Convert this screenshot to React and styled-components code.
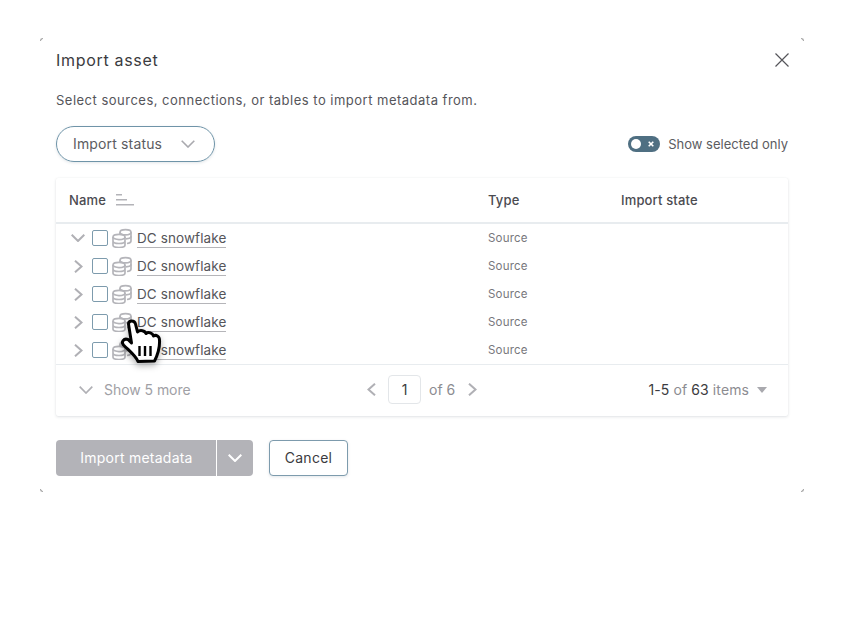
import React from "react";
import styled, {createGlobalStyle} from "styled-components";

const GlobalStyle = createGlobalStyle`
  html, body {
    margin: 0;
    padding: 0;
    background: #fff;
    font-family: Inter, "Liberation Sans", sans-serif;
    color: #3b3b40;
  }
`;

const Modal = styled.div`
  position: relative;
  box-sizing: border-box;
  width: 764px;
  height: 454px;
  margin: 38px 40px 0;
  padding: 10px 16px 16px;
  display: flex;
  flex-direction: column;
`;

const Tick = styled.span`
  position: absolute;
  width: 3px;
  height: 3px;
  ${p => p.$top ? "top: 0;" : "bottom: 0;"}
  ${p => p.$left ? "left: 0;" : "right: 0;"}
  border-${p => p.$top ? "top" : "bottom"}: 1px solid #a5a5a5;
  border-${p => p.$left ? "left" : "right"}: 1px solid #a5a5a5;
  border-${p => p.$top ? "top" : "bottom"}-${p => p.$left ? "left" : "right"}-radius: 3px;
  box-sizing: border-box;
`;

const Header = styled.div`
  display: flex;
  align-items: center;
  justify-content: space-between;
  height: 24px;
`;

const Title = styled.h2`
  margin: 0;
  font-size: 16px;
  font-weight: 400;
  letter-spacing: 0.68px;
  color: #3b3b40;
`;

const CloseIcon = styled.svg`
  margin-right: -1px;
`;

const Description = styled.p`
  margin: 18px 0 0;
  height: 20px;
  line-height: 20px;
  font-size: 13px;
  letter-spacing: 0.49px;
  color: #55555a;
`;

const Toolbar = styled.div`
  display: flex;
  align-items: center;
  justify-content: space-between;
  margin-top: 16px;
`;

const FilterPill = styled.div`
  box-sizing: border-box;
  width: 159px;
  height: 36px;
  padding: 0 19px 0 16px;
  display: flex;
  align-items: center;
  justify-content: space-between;
  border: 1px solid #6f94a8;
  border-radius: 18px;
  box-shadow: 0 1px 3px rgba(60, 90, 110, .15);
  font-size: 14px;
  letter-spacing: 0.15px;
  line-height: 16px;
  color: #5c5c61;
`;

const ToggleRow = styled.div`
  display: flex;
  align-items: center;
  gap: 8px;
  font-size: 13px;
  color: #5c5c61;
`;

const Toggle = styled.span`
  position: relative;
  width: 32px;
  height: 16px;
  border-radius: 8px;
  background: #4f6f82;
  display: block;
`;

const Knob = styled.span`
  position: absolute;
  top: 3px;
  left: 3px;
  width: 10px;
  height: 10px;
  border-radius: 50%;
  background: #fff;
`;

const ToggleX = styled.svg`
  position: absolute;
  top: 5px;
  right: 6px;
`;

const Card = styled.div`
  margin-top: 16px;
  height: 238px;
  display: flex;
  flex-direction: column;
  border-radius: 2px;
  background: #fff;
  box-shadow: 0 1px 3px rgba(40, 60, 80, .14), 0 0 1px rgba(40, 60, 80, .08);
`;

const TableRow = styled.div`
  display: grid;
  grid-template-columns: 432px 133px 1fr;
  align-items: center;
  height: ${p => p.$head ? "44px" : "28px"};
  ${p => p.$head && "border-bottom: 2px solid #e8ecef;"}
`;

const HeadCell = styled.div`
  display: flex;
  align-items: center;
  gap: 10px;
  font-size: 13px;
  font-weight: 500;
  letter-spacing: 0.15px;
  color: #4b4b50;
  ${p => p.$first && "padding-left: 13px;"}
`;

const NameCell = styled.div`
  display: flex;
  align-items: center;
  padding-left: 15px;
`;

const ChevronSlot = styled.span`
  width: 14px;
  display: flex;
  justify-content: center;
`;

const Checkbox = styled.span`
  box-sizing: border-box;
  width: 16px;
  height: 16px;
  margin: 0 4px 0 7px;
  border: 1px solid #7d9bad;
  border-radius: 2px;
  background: #fff;
`;

const AssetLink = styled.span`
  margin: 2px 0 0 5px;
  font-size: 13.5px;
  line-height: 17px;
  letter-spacing: 0.1px;
  color: #55555a;
  border-bottom: 1px solid #b5b5b9;
`;

const TypeCell = styled.div`
  font-size: 11.5px;
  letter-spacing: 0.2px;
  color: #77777c;
`;

const Rows = styled.div`
  flex: none;
`;

const Footer = styled.div`
  flex: 1;
  box-sizing: border-box;
  padding-bottom: 2px;
  display: grid;
  grid-template-columns: 306px auto 1fr;
  align-items: center;
  border-top: 1px solid #e8ecef;
  font-size: 14px;
  color: #8c8c91;
`;

const ShowMore = styled.div`
  display: flex;
  align-items: center;
  gap: 11px;
  padding-left: 23px;
  letter-spacing: -0.05px;
  color: #a0a0a5;
`;

const Pager = styled.div`
  display: flex;
  align-items: center;
  padding-left: 5px;
`;

const PageInput = styled.span`
  box-sizing: border-box;
  width: 33px;
  height: 29px;
  margin: 0 8px 0 12px;
  display: flex;
  align-items: center;
  justify-content: center;
  border: 1px solid #e3e6e9;
  border-radius: 4px;
  font-size: 14px;
  color: #3b3b40;
`;

const PageTotal = styled.span`
  margin-right: 13px;
`;

const ItemCount = styled.div`
  display: flex;
  align-items: center;
  justify-content: flex-end;
  gap: 8px;
  padding-right: 21px;
  letter-spacing: 0.1px;
`;

const Strong = styled.b`
  font-weight: 400;
  color: #3b3b40;
`;

const Caret = styled.span`
  width: 0;
  height: 0;
  border-left: 5px solid transparent;
  border-right: 5px solid transparent;
  border-top: 6px solid #a9a9ae;
  margin-top: 1px;
`;

const Actions = styled.div`
  display: flex;
  gap: 16px;
  margin-top: 24px;
`;

const SplitButton = styled.div`
  display: flex;
  gap: 1px;
`;

const PrimaryButton = styled.button`
  height: 36px;
  width: ${p => p.$narrow ? "36px" : "160px"};
  padding: 0 0 ${p => p.$narrow ? "0" : "2px"} ${p => p.$narrow ? "0" : "1px"};
  display: flex;
  align-items: center;
  justify-content: center;
  border: 0;
  border-radius: ${p => p.$narrow ? "0 4px 4px 0" : "4px 0 0 4px"};
  background: #b3b3b8;
  color: #fff;
  font: 400 14px Inter, "Liberation Sans", sans-serif;
  letter-spacing: 0.24px;
`;

const CancelButton = styled.button`
  width: 79px;
  height: 36px;
  padding: 0 0 2px;
  border: 1px solid #7d9bad;
  border-radius: 4px;
  background: #fff;
  box-shadow: 0 1px 3px rgba(60, 90, 110, .15);
  color: #3b3b40;
  font: 400 14px Inter, "Liberation Sans", sans-serif;
  letter-spacing: 0.25px;
`;

const Pointer = styled.svg`
  position: absolute;
  left: 80px;
  top: 280px;
  filter: drop-shadow(0 3px 3px rgba(0, 0, 0, .3));
`;

const Chevron = ({dir = "down", color = "#b0b0b5", width: w = 2}) => {
    if (dir === "down") {
        return <svg width="14" height="8" viewBox="0 0 14 8" fill="none" stroke={color} strokeWidth={w}>
            <path d="M.7.7L7 7L13.300.7"/>
        </svg>
    }
    return <svg width="9" height="13" viewBox="0 0 9 13" fill="none" stroke={color} strokeWidth={w}>
        <path d={dir === "left" ? "M8 .7L1.500 6.500L8 12.300" : "M1 .7L7.500 6.500L1 12.300"}/>
    </svg>
}

const SortIcon = () => <svg width="18" height="12" viewBox="0 0 18 12" fill="#b3b3b8">
    <rect x="0" y="0" width="6" height="1.5"/>
    <rect x="0" y="5" width="11" height="1.5"/>
    <rect x="0" y="10" width="18" height="1.5"/>
</svg>

const SourceIcon = () => <svg width="20" height="20" viewBox="0 0 20 20" fill="none" stroke="#b5b5ba" strokeWidth="1.7">
    <path d="M8 6.200V4.200C8 2.600 10.600 1.600 13.500 1.600S19 2.600 19 4.200V13c0 1.300-1.600 2.200-4 2.500"/>
    <path d="M8 4.200c0 1.600 2.600 2.600 5.500 2.600S19 5.800 19 4.200M14 10.800c2.600-.1 5-1 5-2.500"/>
    <ellipse cx="7" cy="9" rx="6" ry="2.600"/>
    <path d="M1 9v8c0 1.500 2.700 2.500 6 2.500s6-1 6-2.500V9M1 13c0 1.500 2.700 2.500 6 2.500s6-1 6-2.500"/>
</svg>

const HandCursor = () => <Pointer width="44" height="48" viewBox="0 0 44 48">
    <path fill="#fff" stroke="#000" strokeWidth="3" strokeLinejoin="round"
          d="M8.500 6C8.500 2 14.500 2 15.500 6L17.500 14C20 11.500 25 12.500 26 15.500C28.500 13.500 32.500 15 33.500 18C36 16.500 39.500 18 39.500 22C40 30 37.500 37 34.500 43L18 43.500C16 38 10 33.500 3.500 27C1 24 3.500 20 8 21.500L11.500 25Z"/>
    <path fill="none" stroke="#000" strokeWidth="2.400" d="M19.500 28V38M25 28V38M30.500 28V38"/>
</Pointer>

const rows = [true, false, false, false, false]

const App = () => {
    return (<>
        <GlobalStyle/>
        <Modal>
            <Tick $top $left/>
            <Tick $top/>
            <Tick $left/>
            <Tick/>
            <Header>
                <Title>Import asset</Title>
                <CloseIcon width="14" height="14" viewBox="0 0 14 14" fill="none" stroke="#55555a" strokeWidth="1.2">
                    <path d="M.5.5L13.500 13.500M13.500.5L.5 13.500"/>
                </CloseIcon>
            </Header>
            <Description>Select sources, connections, or tables to import metadata from.</Description>
            <Toolbar>
                <FilterPill>
                    <span>Import status</span>
                    <Chevron color="#a9a9ae" width={1.6}/>
                </FilterPill>
                <ToggleRow>
                    <Toggle>
                        <Knob/>
                        <ToggleX width="6" height="6" viewBox="0 0 6 6">
                            <path d="M.7.7l4.600 4.600M5.300.7L.7 5.300" stroke="#fff" strokeWidth="1.600"/>
                        </ToggleX>
                    </Toggle>
                    Show selected only
                </ToggleRow>
            </Toolbar>
            <Card>
                <TableRow $head>
                    <HeadCell $first>Name <SortIcon/></HeadCell>
                    <HeadCell>Type</HeadCell>
                    <HeadCell>Import state</HeadCell>
                </TableRow>
                <Rows>
                    {rows.map((open, i) => <TableRow key={i}>
                        <NameCell>
                            <ChevronSlot>
                                <Chevron dir={open ? "down" : "right"}/>
                            </ChevronSlot>
                            <Checkbox/>
                            <SourceIcon/>
                            <AssetLink>DC snowflake</AssetLink>
                        </NameCell>
                        <TypeCell>Source</TypeCell>
                        <div/>
                    </TableRow>)}
                </Rows>
                <Footer>
                    <ShowMore>
                        <Chevron color="#b0b0b5" width={1.7}/>
                        Show 5 more
                    </ShowMore>
                    <Pager>
                        <Chevron dir="left"/>
                        <PageInput>1</PageInput>
                        <PageTotal>of 6</PageTotal>
                        <Chevron dir="right"/>
                    </Pager>
                    <ItemCount>
                        <span><Strong>1-5</Strong> of <Strong>63</Strong> items</span>
                        <Caret/>
                    </ItemCount>
                </Footer>
            </Card>
            <Actions>
                <SplitButton>
                    <PrimaryButton>Import metadata</PrimaryButton>
                    <PrimaryButton $narrow><Chevron color="#fff"/></PrimaryButton>
                </SplitButton>
                <CancelButton>Cancel</CancelButton>
            </Actions>
            <HandCursor/>
        </Modal>
    </>);
};

export default App;
